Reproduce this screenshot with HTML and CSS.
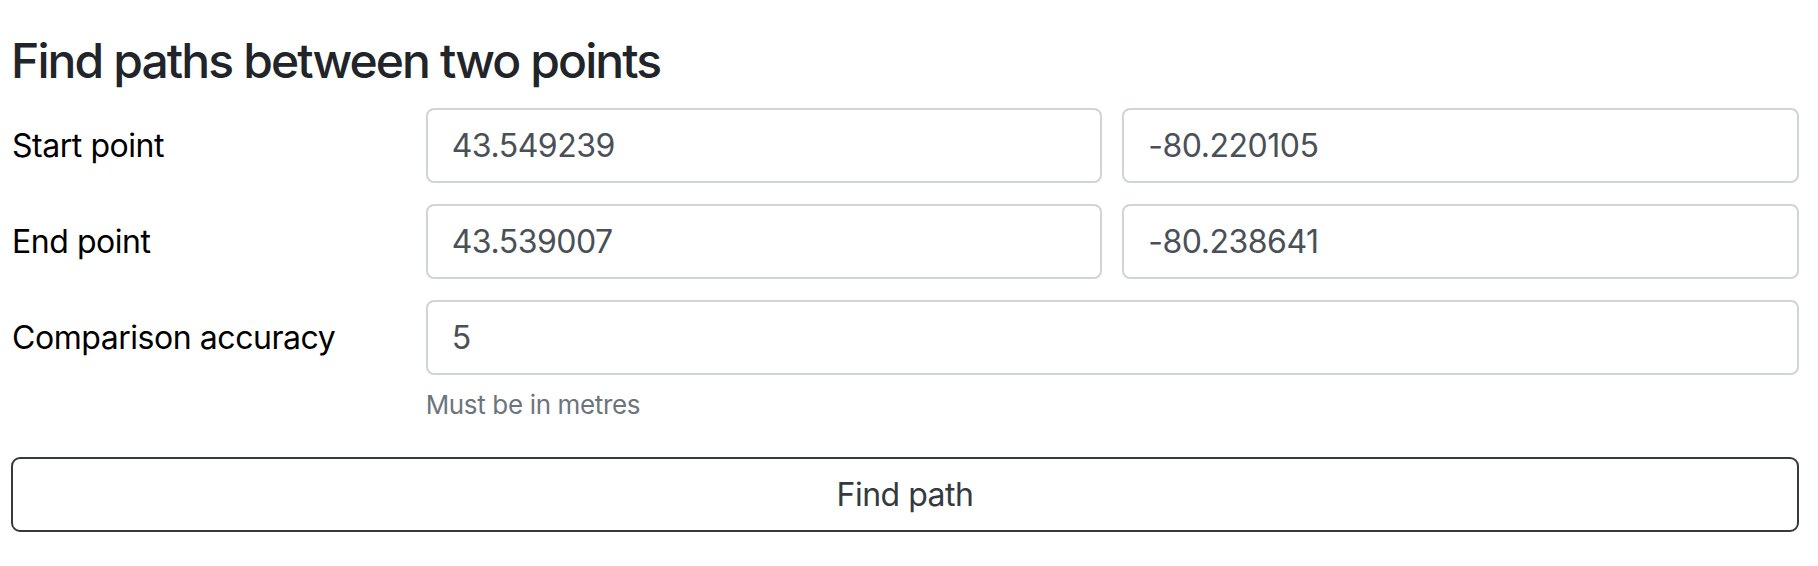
FILE: index.html
```html
<!DOCTYPE html>
<html lang="en">
<head>
<meta charset="utf-8">
<title>Find paths between two points</title>
<link rel="stylesheet" href="styles.css">
</head>
<body>
<main class="page">
  <h1 class="title">Find paths between two points</h1>
  <form class="form">
    <div class="row">
      <label class="label" for="start-lat">Start point</label>
      <input class="field" id="start-lat" type="text" value="43.549239">
      <input class="field" id="start-lng" type="text" value="-80.220105">
    </div>
    <div class="row">
      <label class="label" for="end-lat">End point</label>
      <input class="field" id="end-lat" type="text" value="43.539007">
      <input class="field" id="end-lng" type="text" value="-80.238641">
    </div>
    <div class="row">
      <label class="label" for="accuracy">Comparison accuracy</label>
      <div class="wide">
        <input class="field" id="accuracy" type="text" value="5">
        <div class="help">Must be in metres</div>
      </div>
    </div>
    <button class="btn" type="button">Find path</button>
  </form>
</main>
</body>
</html>
```

FILE: styles.css
```css
* { box-sizing: border-box; }

html, body {
  margin: 0;
  background: #ffffff;
}

body {
  font-family: "Inter", "Liberation Sans", sans-serif;
  color: #212529;
}

.page {
  padding: 32px 19px 0 11px;
}

.title {
  margin: 0 0 18px 0;
  font-size: 48px;
  font-weight: 500;
  line-height: 1.2;
  color: #212529;
  letter-spacing: -1.9px;
}

.form {
  display: flex;
  flex-direction: column;
}

.row {
  display: grid;
  grid-template-columns: 394.7px 1fr 1fr;
  column-gap: 20px;
  align-items: start;
  margin-bottom: 21px;
}

.label {
  display: flex;
  align-items: center;
  height: 75px;
  padding-left: 1px;
  font-size: 32px;
  color: #000000;
  letter-spacing: -0.45px;
}

.field {
  display: block;
  width: 100%;
  height: 75px;
  margin: 0;
  padding: 0 24px;
  border: 2px solid #ced4da;
  border-radius: 8px;
  background: #ffffff;
  font-family: "Inter", "Liberation Sans", sans-serif;
  font-size: 32px;
  color: #495057;
  letter-spacing: -0.5px;
  outline: none;
}

.wide {
  grid-column: 2 / 4;
}

.help {
  margin-top: 10px;
  font-size: 26px;
  line-height: 1.5;
  color: #6c757d;
  letter-spacing: -0.35px;
}

.btn {
  display: block;
  width: 100%;
  height: 75px;
  margin-top: 12px;
  padding: 0;
  border: 2px solid #343a40;
  border-radius: 9px;
  background: #ffffff;
  font-family: "Inter", "Liberation Sans", sans-serif;
  font-size: 32px;
  color: #343a40;
  letter-spacing: -0.5px;
  cursor: pointer;
}
```
